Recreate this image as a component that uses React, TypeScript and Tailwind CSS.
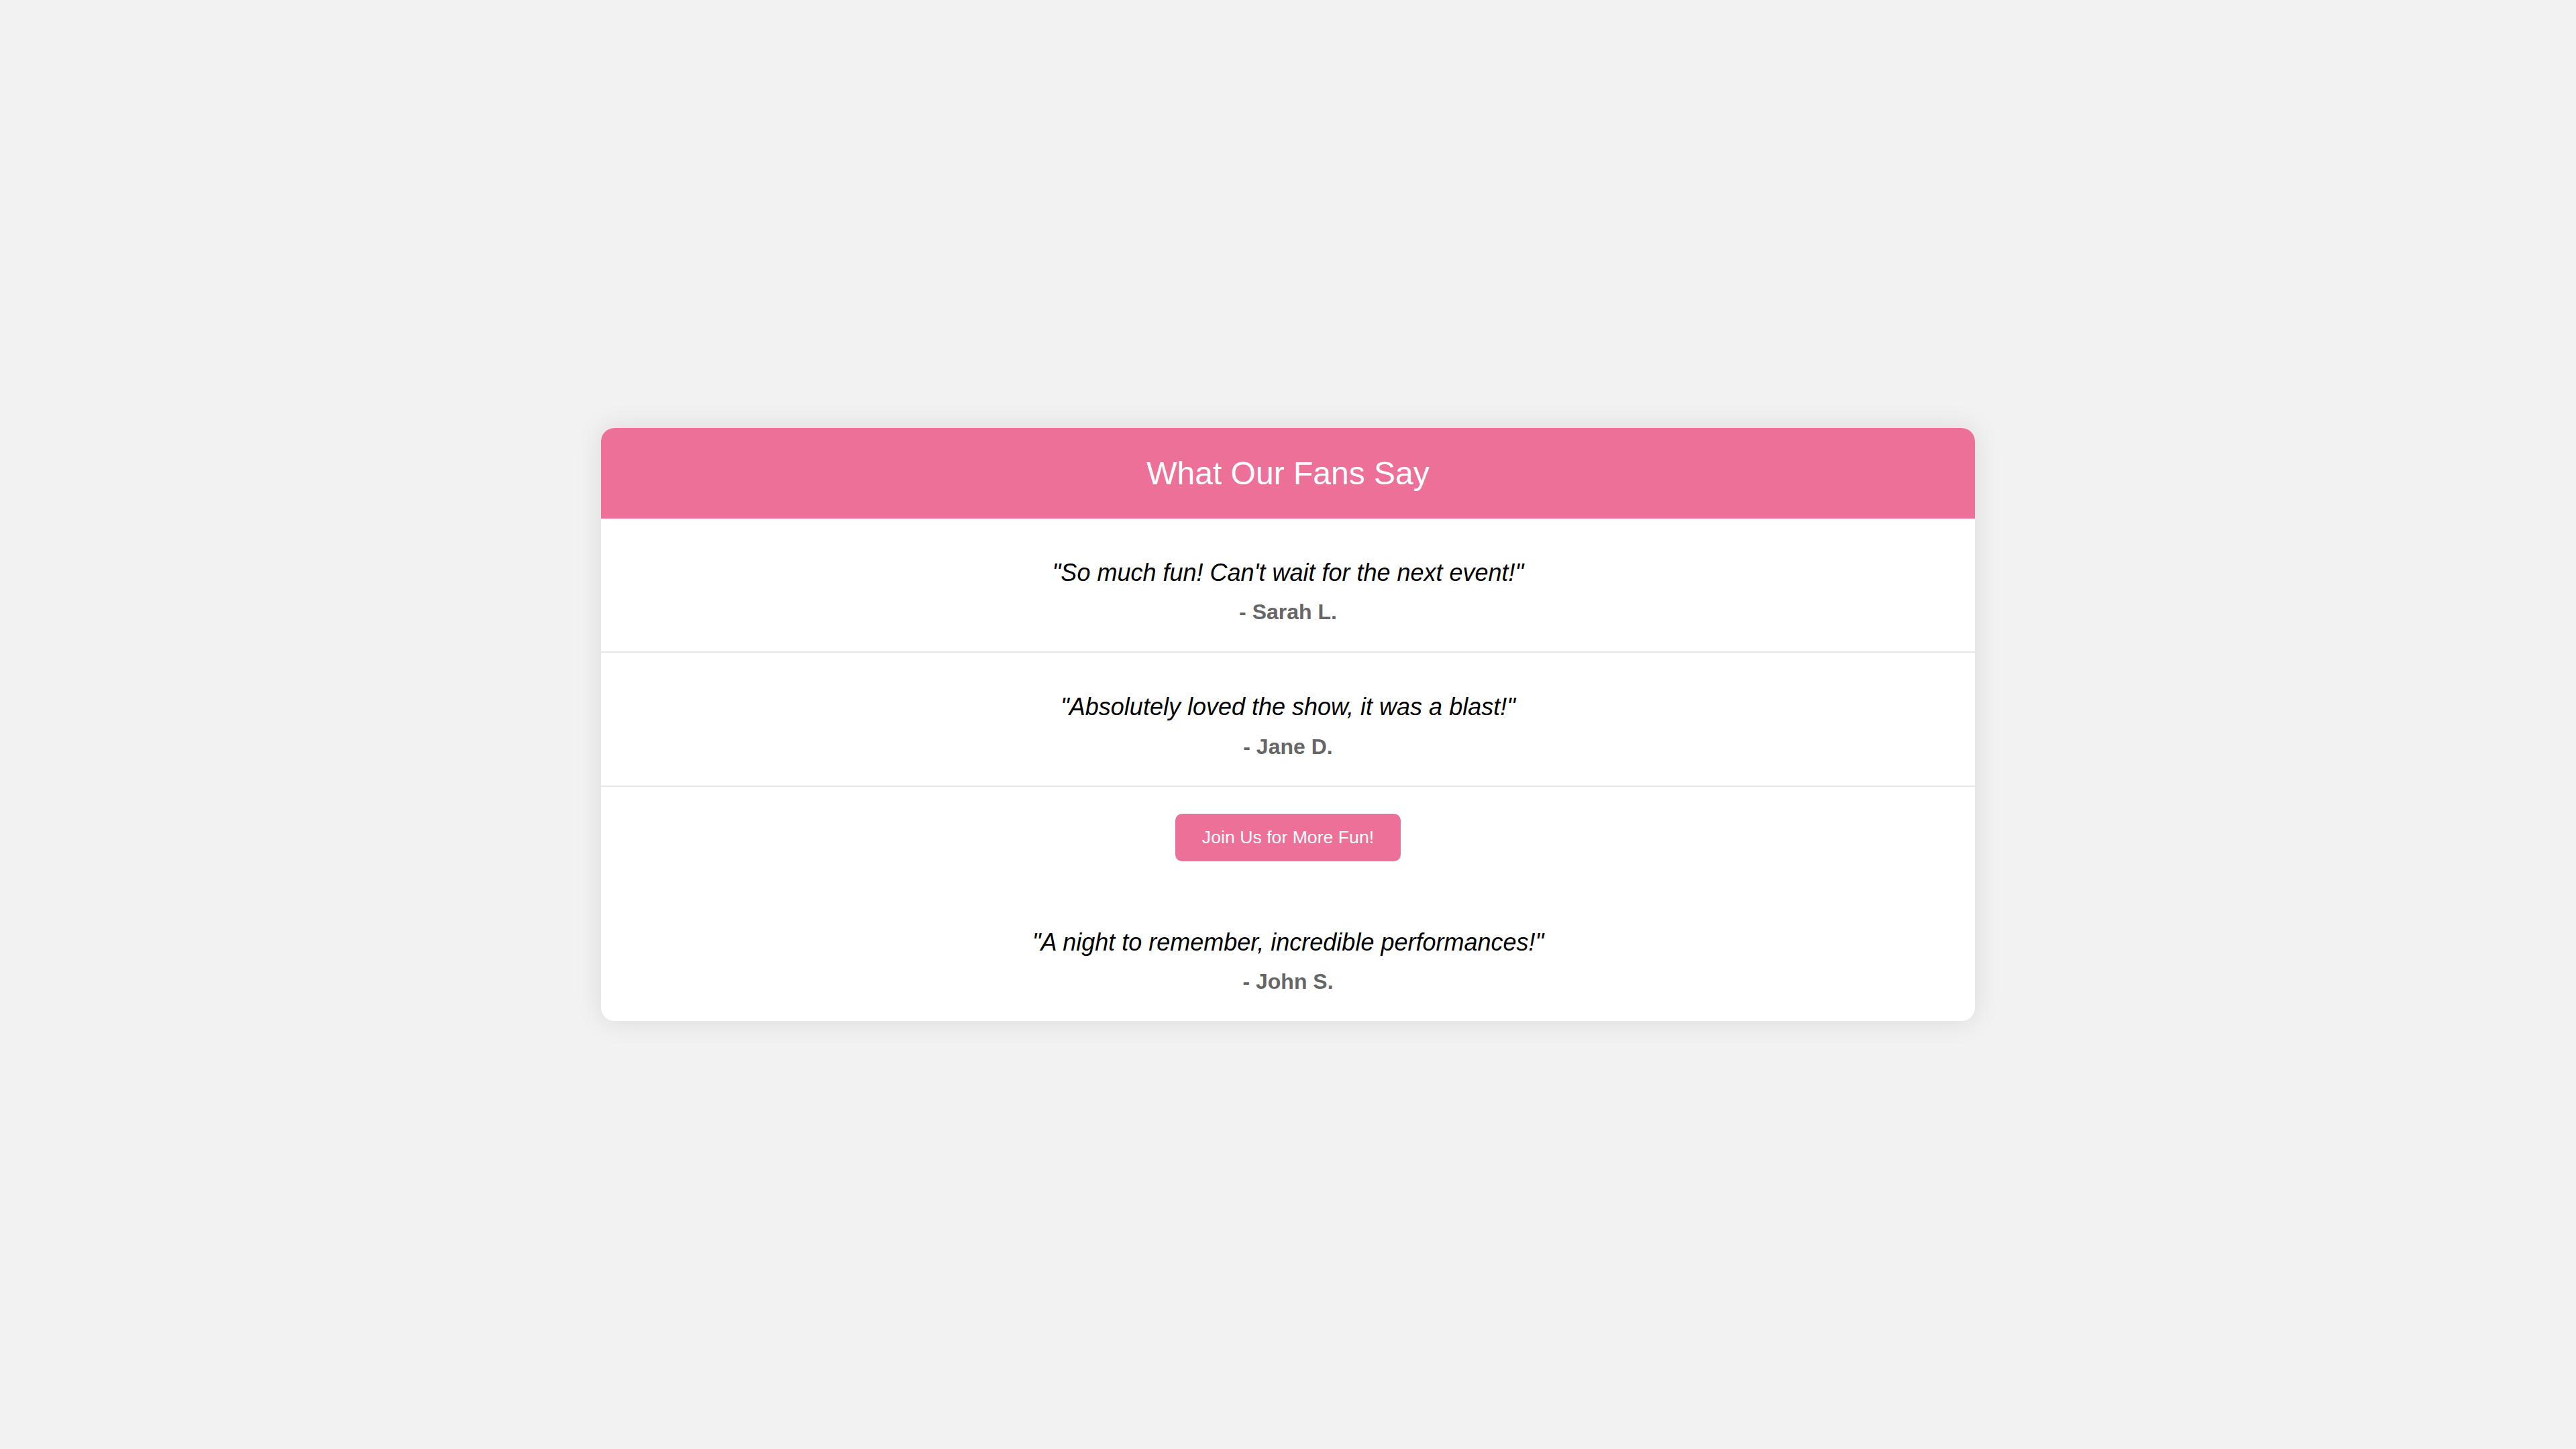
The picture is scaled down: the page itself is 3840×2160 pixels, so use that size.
import React from "react";

const testimonials = [
  { quote: "\"So much fun! Can't wait for the next event!\"", author: "- Sarah L." },
  { quote: "\"Absolutely loved the show, it was a blast!\"", author: "- Jane D." },
];

const Testimonial = ({ quote, author, last }: { quote: string; author: string; last?: boolean }) => (
  <div className={last ? "p-[40px] text-center" : "p-[40px] text-center border-b-2 border-[#e8e8e8]"}>
    <p className="my-[20px] text-[36px] leading-[1.15] italic text-black">{quote}</p>
    <p className="text-[32px] leading-[1.15] font-bold text-[#666666]">{author}</p>
  </div>
);

export default function App() {
  return (
    <div className="min-h-screen w-full bg-[#f2f2f2] flex items-center justify-center font-['Liberation_Sans',Arial,sans-serif]">
      <div className="w-[2048px] bg-white rounded-[20px] overflow-hidden shadow-[0_0_40px_rgba(0,0,0,0.1)]">
        <div className="bg-[#ec7097] p-[40px] text-center">
          <h2 className="text-[48px] leading-[1.15] font-normal text-white">What Our Fans Say</h2>
        </div>

        {testimonials.map((t) => (
          <Testimonial key={t.author} quote={t.quote} author={t.author} />
        ))}

        <div className="p-[40px] flex justify-center">
          <button className="bg-[#ec7097] text-white text-[26.67px] leading-[1.15] px-[40px] py-[20px] rounded-[10px]">
            Join Us for More Fun!
          </button>
        </div>

        <Testimonial
          quote={"\"A night to remember, incredible performances!\""}
          author="- John S."
          last
        />
      </div>
    </div>
  );
}
